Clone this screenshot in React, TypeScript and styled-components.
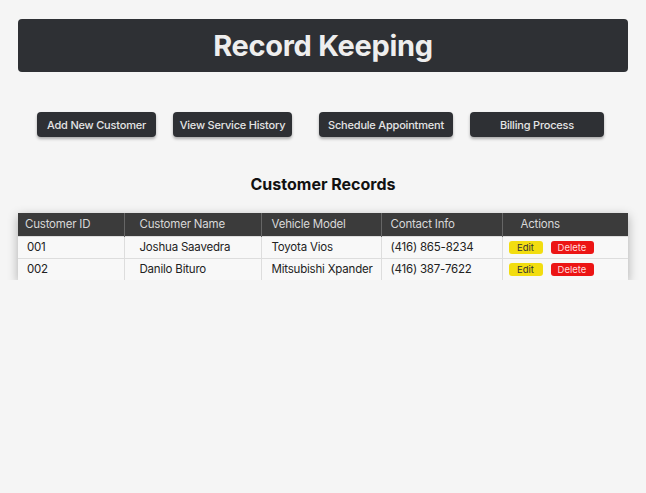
import React from 'react';
import styled, { createGlobalStyle } from 'styled-components';

const GlobalStyle = createGlobalStyle`
  body {
    margin: 0;
    background: #f5f5f5;
    font-family: Inter, "Liberation Sans", sans-serif;
  }
`;

const Page = styled.div`
  padding: 19px 18px 0;
  display: flex;
  flex-direction: column;
`;

const TitleBar = styled.header`
  height: 53px;
  background: #2e3034;
  border-radius: 4px;
  display: flex;
  align-items: center;
  justify-content: center;
`;

const Title = styled.h1`
  margin: 0;
  font-size: 29px;
  font-weight: 700;
  color: #eeeeee;
  letter-spacing: -0.3px;
`;

const ButtonRow = styled.nav`
  display: flex;
  justify-content: center;
  gap: 27px;
  margin-top: 40px;
  padding-right: 5px;
`;

const ButtonGroup = styled.div`
  display: flex;
  gap: 17px;
`;

const NavButton = styled.button<{ $width: number }>`
  width: ${({ $width }) => `${$width}px`};
  height: 25px;
  padding: 0;
  border: none;
  border-radius: 4px;
  background: #2e3034;
  color: #e4e4e4;
  font-family: inherit;
  font-size: 11px;
  font-weight: 500;
  letter-spacing: -0.2px;
  white-space: nowrap;
  box-shadow: 0 2px 3px rgba(0, 0, 0, 0.3);
  cursor: pointer;
`;

const SectionTitle = styled.h2`
  margin: 37px 0 0;
  text-align: center;
  font-size: 16px;
  font-weight: 700;
  color: #111;
`;

const Table = styled.table`
  margin-top: 19px;
  width: 610px;
  border-collapse: collapse;
  table-layout: fixed;
  font-size: 11.5px;
  box-shadow: 0 3px 10px rgba(0, 0, 0, 0.3);
`;

const HeadRow = styled.tr`
  height: 23px;
  background: #3b3b3b;
`;

const Th = styled.th<{ $pad: number }>`
  padding: 0 0 0 ${({ $pad }) => `${$pad}px`};
  text-align: left;
  font-weight: 400;
  color: #d8d8d8;
  letter-spacing: -0.2px;
  border-right: 1px solid #666;

  &:last-child {
    border-right: none;
  }
`;

const BodyRow = styled.tr`
  height: 22px;
  background: #f8f8f8;
  border-top: 1px solid #dddddd;
`;

const Td = styled.td<{ $pad: number }>`
  padding: 0 0 0 ${({ $pad }) => `${$pad}px`};
  font-size: 11.5px;
  letter-spacing: -0.2px;
  color: #222;
  border-right: 1px solid #dddddd;
  white-space: nowrap;

  &:last-child {
    border-right: none;
  }
`;

const ActionCell = styled.div`
  display: flex;
  align-items: center;
  gap: 8px;
`;

const ActionButton = styled.button<{ $kind: 'edit' | 'delete' }>`
  height: 13px;
  width: ${({ $kind }) => ($kind === 'edit' ? '34px' : '43px')};
  padding: 0;
  border: none;
  border-radius: 3px;
  font-family: inherit;
  font-size: 9.5px;
  line-height: 13px;
  background: ${({ $kind }) => ($kind === 'edit' ? '#f2dd10' : '#ec1515')};
  color: ${({ $kind }) => ($kind === 'edit' ? '#333' : '#ffd9d9')};
  cursor: pointer;
`;

const columns = [
  { label: 'Customer ID', width: 106, head: 7, body: 9 },
  { label: 'Customer Name', width: 137, head: 15, body: 15 },
  { label: 'Vehicle Model', width: 120, head: 10, body: 10 },
  { label: 'Contact Info', width: 121, head: 9, body: 9 },
  { label: 'Actions', width: 126, head: 18, body: 6 },
];

const customers = [
  { id: '001', name: 'Joshua Saavedra', vehicle: 'Toyota Vios', contact: '(416) 865-8234' },
  { id: '002', name: 'Danilo Bituro', vehicle: 'Mitsubishi Xpander', contact: '(416) 387-7622' },
];

function App() {
  return (
    <>
      <GlobalStyle />
      <Page>
        <TitleBar>
          <Title>Record Keeping</Title>
        </TitleBar>

        <ButtonRow>
          <ButtonGroup>
            <NavButton $width={119}>Add New Customer</NavButton>
            <NavButton $width={119}>View Service History</NavButton>
          </ButtonGroup>
          <ButtonGroup>
            <NavButton $width={134}>Schedule Appointment</NavButton>
            <NavButton $width={134}>Billing Process</NavButton>
          </ButtonGroup>
        </ButtonRow>

        <SectionTitle>Customer Records</SectionTitle>

        <Table>
          <colgroup>
            {columns.map((c) => (
              <col key={c.label} style={{ width: c.width }} />
            ))}
          </colgroup>
          <thead>
            <HeadRow>
              {columns.map((c) => (
                <Th key={c.label} $pad={c.head}>{c.label}</Th>
              ))}
            </HeadRow>
          </thead>
          <tbody>
            {customers.map((row) => (
              <BodyRow key={row.id}>
                <Td $pad={columns[0].body}>{row.id}</Td>
                <Td $pad={columns[1].body}>{row.name}</Td>
                <Td $pad={columns[2].body}>{row.vehicle}</Td>
                <Td $pad={columns[3].body}>{row.contact}</Td>
                <Td $pad={columns[4].body}>
                  <ActionCell>
                    <ActionButton $kind="edit">Edit</ActionButton>
                    <ActionButton $kind="delete">Delete</ActionButton>
                  </ActionCell>
                </Td>
              </BodyRow>
            ))}
          </tbody>
        </Table>
      </Page>
    </>
  );
}

export default App;
